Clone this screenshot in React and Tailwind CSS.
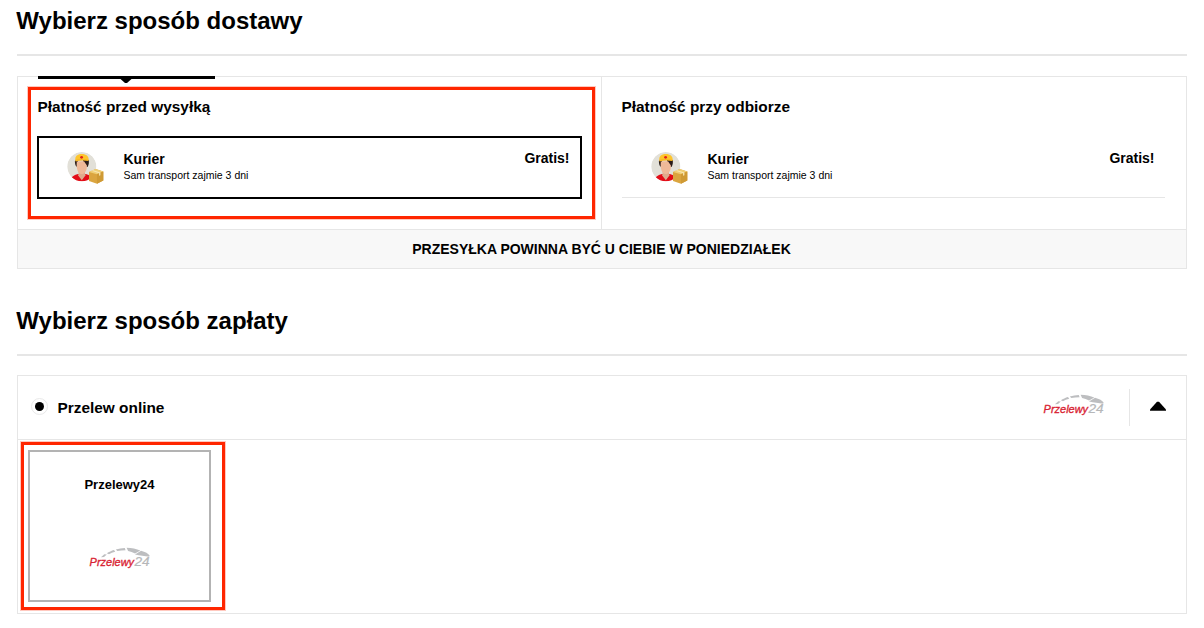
function CourierIcon() {
  return (
    <svg className="block h-8 w-[37px] shrink-0" viewBox="0 0 37 32">
      <defs>
        <clipPath id="avatar">
          <circle cx="14.8" cy="14.6" r="14.6" />
        </clipPath>
      </defs>
      <g clipPath="url(#avatar)">
        <circle cx="14.8" cy="14.6" r="14.6" fill="#e2e0d8" />
        <path d="M3.500 29.500c0-4.500 3.300-6.300 7.300-7.500h8c4 1.200 7.300 3 7.300 7.500z" fill="#e30d18" />
        <path d="M11.500 18H18v4.500l1 .3-4.200 5.400-4.200-5.400 1-.3z" fill="#dfab8d" />
        <path d="M8 8.500h3v3.500l-1 2.500h-.8C8 12.600 7.700 10 8 8.500z" fill="#2b1d1a" />
        <path d="M16 8h5.700c.5 2.500 0 5-1.200 7h-.8L16 10z" fill="#2b1d1a" />
        <path d="M9.800 9.500l7.200-.3 2.900 4.300c0 3.500-.5 5.500-2.300 7.200-1.500 1.800-4.200 1.800-5.700 0-2.300-2.700-2.500-6.700-2.100-11.200z" fill="#efb998" />
        <path d="M8.300 7.700C8 4.300 10.300 2 14.800 2s7 2.300 6.800 5.700z" fill="#fdc52c" />
        <path d="M8.100 7.600c4.300-1.200 9.300-1.200 13.700 0l-.4 1.500c-4.200-1-8.700-.9-12.800.4z" fill="#f9b821" />
        <circle cx="14.600" cy="5.300" r="1.400" fill="#e0241b" />
      </g>
      <path d="M22 20l6.700-2.900 7.600 2.300v9.100l-6.300 3.200-8-2.700z" fill="#dba53f" />
      <path d="M22 20l6.700-2.900 7.600 2.300-6.400 2.900z" fill="#f0cf75" />
      <path d="M29.900 22.300l6.400-2.900v9.100L30 31.700z" fill="#cf9a35" />
      <path d="M24.800 18.800l1.300-.6 7.300 2.400v2.600l-1.300.6v-2.500z" fill="#f8e7b4" />
    </svg>
  );
}

function Przelewy24Logo() {
  return (
    <svg className="block h-6 w-[62px] shrink-0 overflow-visible" viewBox="0 0 62 24">
      <g fill="#bdbec0">
        <path d="M12 10.300l3.300-3 2.500.1-2.800 2.700z" />
        <path d="M17.800 6.300c2.200-1.500 4.700-2.700 7.200-3.400l1.200 1.900c-2.400.6-4.500 1.500-6.200 2.500z" />
        <path d="M26.800 2.400c3-.9 6-1.400 9-1.500l.8 2.300c-3 0-5.800.3-8.300.9z" />
        <path d="M37.600.7c5 .1 10 1.100 13.700 2.800l-5.200 2.900c-2.400-1-4.700-1.900-7-2.500z" />
        <path d="M52 3.700c4.200 1.200 7.500 2.800 8.600 4.900l-.4 1.100c-4.500-.9-9.200-.9-14.200-2.300z" />
      </g>
      <text
        x="0.600"
        y="18.600"
        textLength="44.500"
        lengthAdjust="spacingAndGlyphs"
        fill="#d91f34"
        stroke="#d91f34"
        strokeWidth="0.350"
        fontFamily="Liberation Sans, sans-serif"
        fontStyle="italic"
        fontSize="11.800"
      >
        Przelewy
      </text>
      <text
        x="45.400"
        y="18.600"
        textLength="15.200"
        lengthAdjust="spacingAndGlyphs"
        fill="#b6b7b9"
        stroke="#b6b7b9"
        strokeWidth="0.200"
        fontFamily="Liberation Sans, sans-serif"
        fontStyle="italic"
        fontSize="12"
      >
        24
      </text>
    </svg>
  );
}

function SectionTitle({ children }) {
  return (
    <h2 className="h-[56px] border-b-2 border-[#e6e6e6] pt-[7px] text-2xl leading-7 font-bold">
      <span className="-ml-[0.7px]">{children}</span>
    </h2>
  );
}

function DeliveryOption({ title, selected }) {
  return (
    <div
      className={
        selected
          ? "relative w-[584px] border-r border-[#e6e6e6] pt-5 pr-[19px] pl-[19px]"
          : "relative flex-1 pt-5 pr-[21px] pl-5"
      }
    >
      {selected && (
        <div className="absolute -top-px left-5 h-[3px] w-[177px] bg-black">
          <svg className="absolute top-[3px] left-[82px] h-1 w-3" viewBox="0 0 12 4">
            <path d="M.5 0h11L7 4H5z" />
          </svg>
        </div>
      )}
      <h3 className={selected ? "pl-[0.5px] text-[15.4px] leading-5 font-bold" : "-ml-[0.5px] text-[15.4px] leading-5 font-bold"}>
        {title}
      </h3>
      <div
        className={
          selected
            ? "mt-[19px] flex h-[63px] border-2 border-black pt-[14px] pr-[10.5px] pl-7"
            : "mt-[19px] flex h-[62px] border-b border-[#e6e6e6] pt-4 pr-[10.5px] pl-[29px]"
        }
      >
        <CourierIcon />
        <div className="ml-[19.5px] flex-1">
          <div className="-mt-px text-sm leading-4 font-bold">Kurier</div>
          <div className="text-[10.5px] leading-4">Sam transport zajmie 3 dni</div>
        </div>
        <div className="-mt-0.5 text-sm leading-4 font-bold">Gratis!</div>
      </div>
    </div>
  );
}

function DeliverySection() {
  return (
    <section>
      <SectionTitle>Wybierz sposób dostawy</SectionTitle>
      <div className="relative mt-5 border border-[#e6e6e6]">
        <div className="flex h-[152px]">
          <DeliveryOption title="Płatność przed wysyłką" selected />
          <DeliveryOption title="Płatność przy odbiorze" />
        </div>
        <div className="flex h-[39px] items-center justify-center border-t border-[#e6e6e6] bg-[#f8f8f8] pr-px text-sm font-bold">
          PRZESYŁKA POWINNA BYĆ U CIEBIE W PONIEDZIAŁEK
        </div>
        <Highlight className="top-[10px] left-[10px] h-[132px] w-[567px]" />
      </div>
    </section>
  );
}

function PaymentSection() {
  return (
    <section className="mt-[31px]">
      <SectionTitle>Wybierz sposób zapłaty</SectionTitle>
      <div className="relative mt-[19px] border border-[#e6e6e6]">
        <div className="flex h-16 items-center border-b border-[#e6e6e6] pr-5 pl-[13px]">
          <span className="-mt-0.5 flex size-[17px] items-center justify-center rounded-full border border-[#e9e9e9]">
            <span className="size-[9px] rounded-full bg-black" />
          </span>
          <span className="ml-[9.5px] flex-1 text-[15.4px] font-bold">Przelew online</span>
          <div className="-mt-[3px]">
            <Przelewy24Logo />
          </div>
          <div className="ml-6 h-[37px] w-px bg-[#e6e6e6]" />
          <svg className="-mt-[3px] ml-5 h-[10px] w-4" viewBox="0 0 16 10">
            <path d="M0 9.700V8.500L7 .7h2l7 7.800v1.200z" />
          </svg>
        </div>
        <div className="h-[173px] p-[10px]">
          <div className="flex h-[152px] w-[183px] flex-col items-center border-2 border-[#b3b3b3] pt-[25px]">
            <span className="text-[13px] leading-4 font-bold">Przelewy24</span>
            <div className="mt-[54px]">
              <Przelewy24Logo />
            </div>
          </div>
        </div>
        <Highlight className="top-[66px] left-[3px] h-[168px] w-[204px]" />
      </div>
    </section>
  );
}

function Highlight({ className }) {
  return (
    <div
      className={`pointer-events-none absolute border-[3px] border-[#ff2600] shadow-[0_0_0_1px_#ff260040] ${className}`}
    />
  );
}

export default function App() {
  return (
    <main className="h-[628px] bg-white px-[17px] font-['Liberation_Sans',Arial,sans-serif] text-black">
      <DeliverySection />
      <PaymentSection />
    </main>
  );
}
